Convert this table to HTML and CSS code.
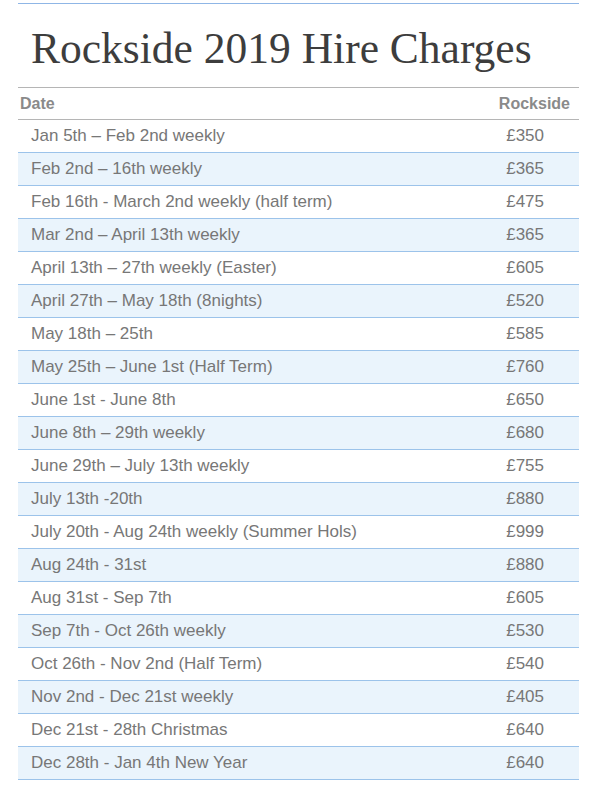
FILE: index.html
```html
<!DOCTYPE html>
<html>
<head>
<meta charset="utf-8">
<link rel="stylesheet" href="styles.css">
</head>
<body>
<div class="page">
  <div class="rule"></div>
  <h1 class="title">Rockside 2019 Hire Charges</h1>
  <table class="charges">
    <thead>
      <tr><th class="c-date">Date</th><th class="c-price">Rockside</th></tr>
    </thead>
    <tbody>
      <tr><td class="c-date">Jan 5th – Feb 2nd weekly</td><td class="c-price">£350</td></tr>
      <tr><td class="c-date">Feb 2nd – 16th weekly</td><td class="c-price">£365</td></tr>
      <tr><td class="c-date">Feb 16th - March 2nd weekly (half term)</td><td class="c-price">£475</td></tr>
      <tr><td class="c-date">Mar 2nd – April 13th weekly</td><td class="c-price">£365</td></tr>
      <tr><td class="c-date">April 13th – 27th weekly (Easter)</td><td class="c-price">£605</td></tr>
      <tr><td class="c-date">April 27th – May 18th (8nights)</td><td class="c-price">£520</td></tr>
      <tr><td class="c-date">May 18th – 25th</td><td class="c-price">£585</td></tr>
      <tr><td class="c-date">May 25th – June 1st (Half Term)</td><td class="c-price">£760</td></tr>
      <tr><td class="c-date">June 1st - June 8th</td><td class="c-price">£650</td></tr>
      <tr><td class="c-date">June 8th – 29th weekly</td><td class="c-price">£680</td></tr>
      <tr><td class="c-date">June 29th – July 13th weekly</td><td class="c-price">£755</td></tr>
      <tr><td class="c-date">July 13th -20th</td><td class="c-price">£880</td></tr>
      <tr><td class="c-date">July 20th - Aug 24th weekly (Summer Hols)</td><td class="c-price">£999</td></tr>
      <tr><td class="c-date">Aug 24th - 31st</td><td class="c-price">£880</td></tr>
      <tr><td class="c-date">Aug 31st - Sep 7th</td><td class="c-price">£605</td></tr>
      <tr><td class="c-date">Sep 7th - Oct 26th weekly</td><td class="c-price">£530</td></tr>
      <tr><td class="c-date">Oct 26th - Nov 2nd (Half Term)</td><td class="c-price">£540</td></tr>
      <tr><td class="c-date">Nov 2nd - Dec 21st weekly</td><td class="c-price">£405</td></tr>
      <tr><td class="c-date">Dec 21st - 28th Christmas</td><td class="c-price">£640</td></tr>
      <tr><td class="c-date">Dec 28th - Jan 4th New Year</td><td class="c-price">£640</td></tr>
    </tbody>
  </table>
</div>
</body>
</html>
```
FILE: styles.css
```css
html, body {
  margin: 0;
  padding: 0;
  background: #ffffff;
}
.page {
  width: 561px;
  margin-left: 18px;
  padding-top: 3px;
  font-family: "Liberation Sans", Arial, sans-serif;
}
.rule {
  height: 1px;
  background: #8fb6e6;
}
.title {
  font-family: "Liberation Serif", "Times New Roman", serif;
  font-weight: normal;
  font-size: 43.5px;
  line-height: 48px;
  color: #3d3d3d;
  margin: 20px 0 0 13px;
  height: 63px;
}
.charges {
  width: 100%;
  border-collapse: collapse;
  border-top: 1px solid #b5b5b5;
}
.charges th {
  font-size: 16px;
  font-weight: bold;
  color: #8a8a8a;
  height: 31px;
  padding: 0 2px;
  border-bottom: 1px solid #b5b5b5;
  vertical-align: middle;
}
.charges th.c-date { text-align: left; }
.charges th.c-price { text-align: right; padding-right: 9px; }
.charges td {
  font-size: 17px;
  color: #777777;
  height: 32px;
  padding: 0;
  border-bottom: 1px solid #9cc3ea;
  vertical-align: middle;
}
.charges td.c-date { padding-left: 13px; }
.charges td.c-price { text-align: right; padding-right: 35px; }
.charges tbody tr:nth-child(even) td { background: #eaf4fc; }
```
